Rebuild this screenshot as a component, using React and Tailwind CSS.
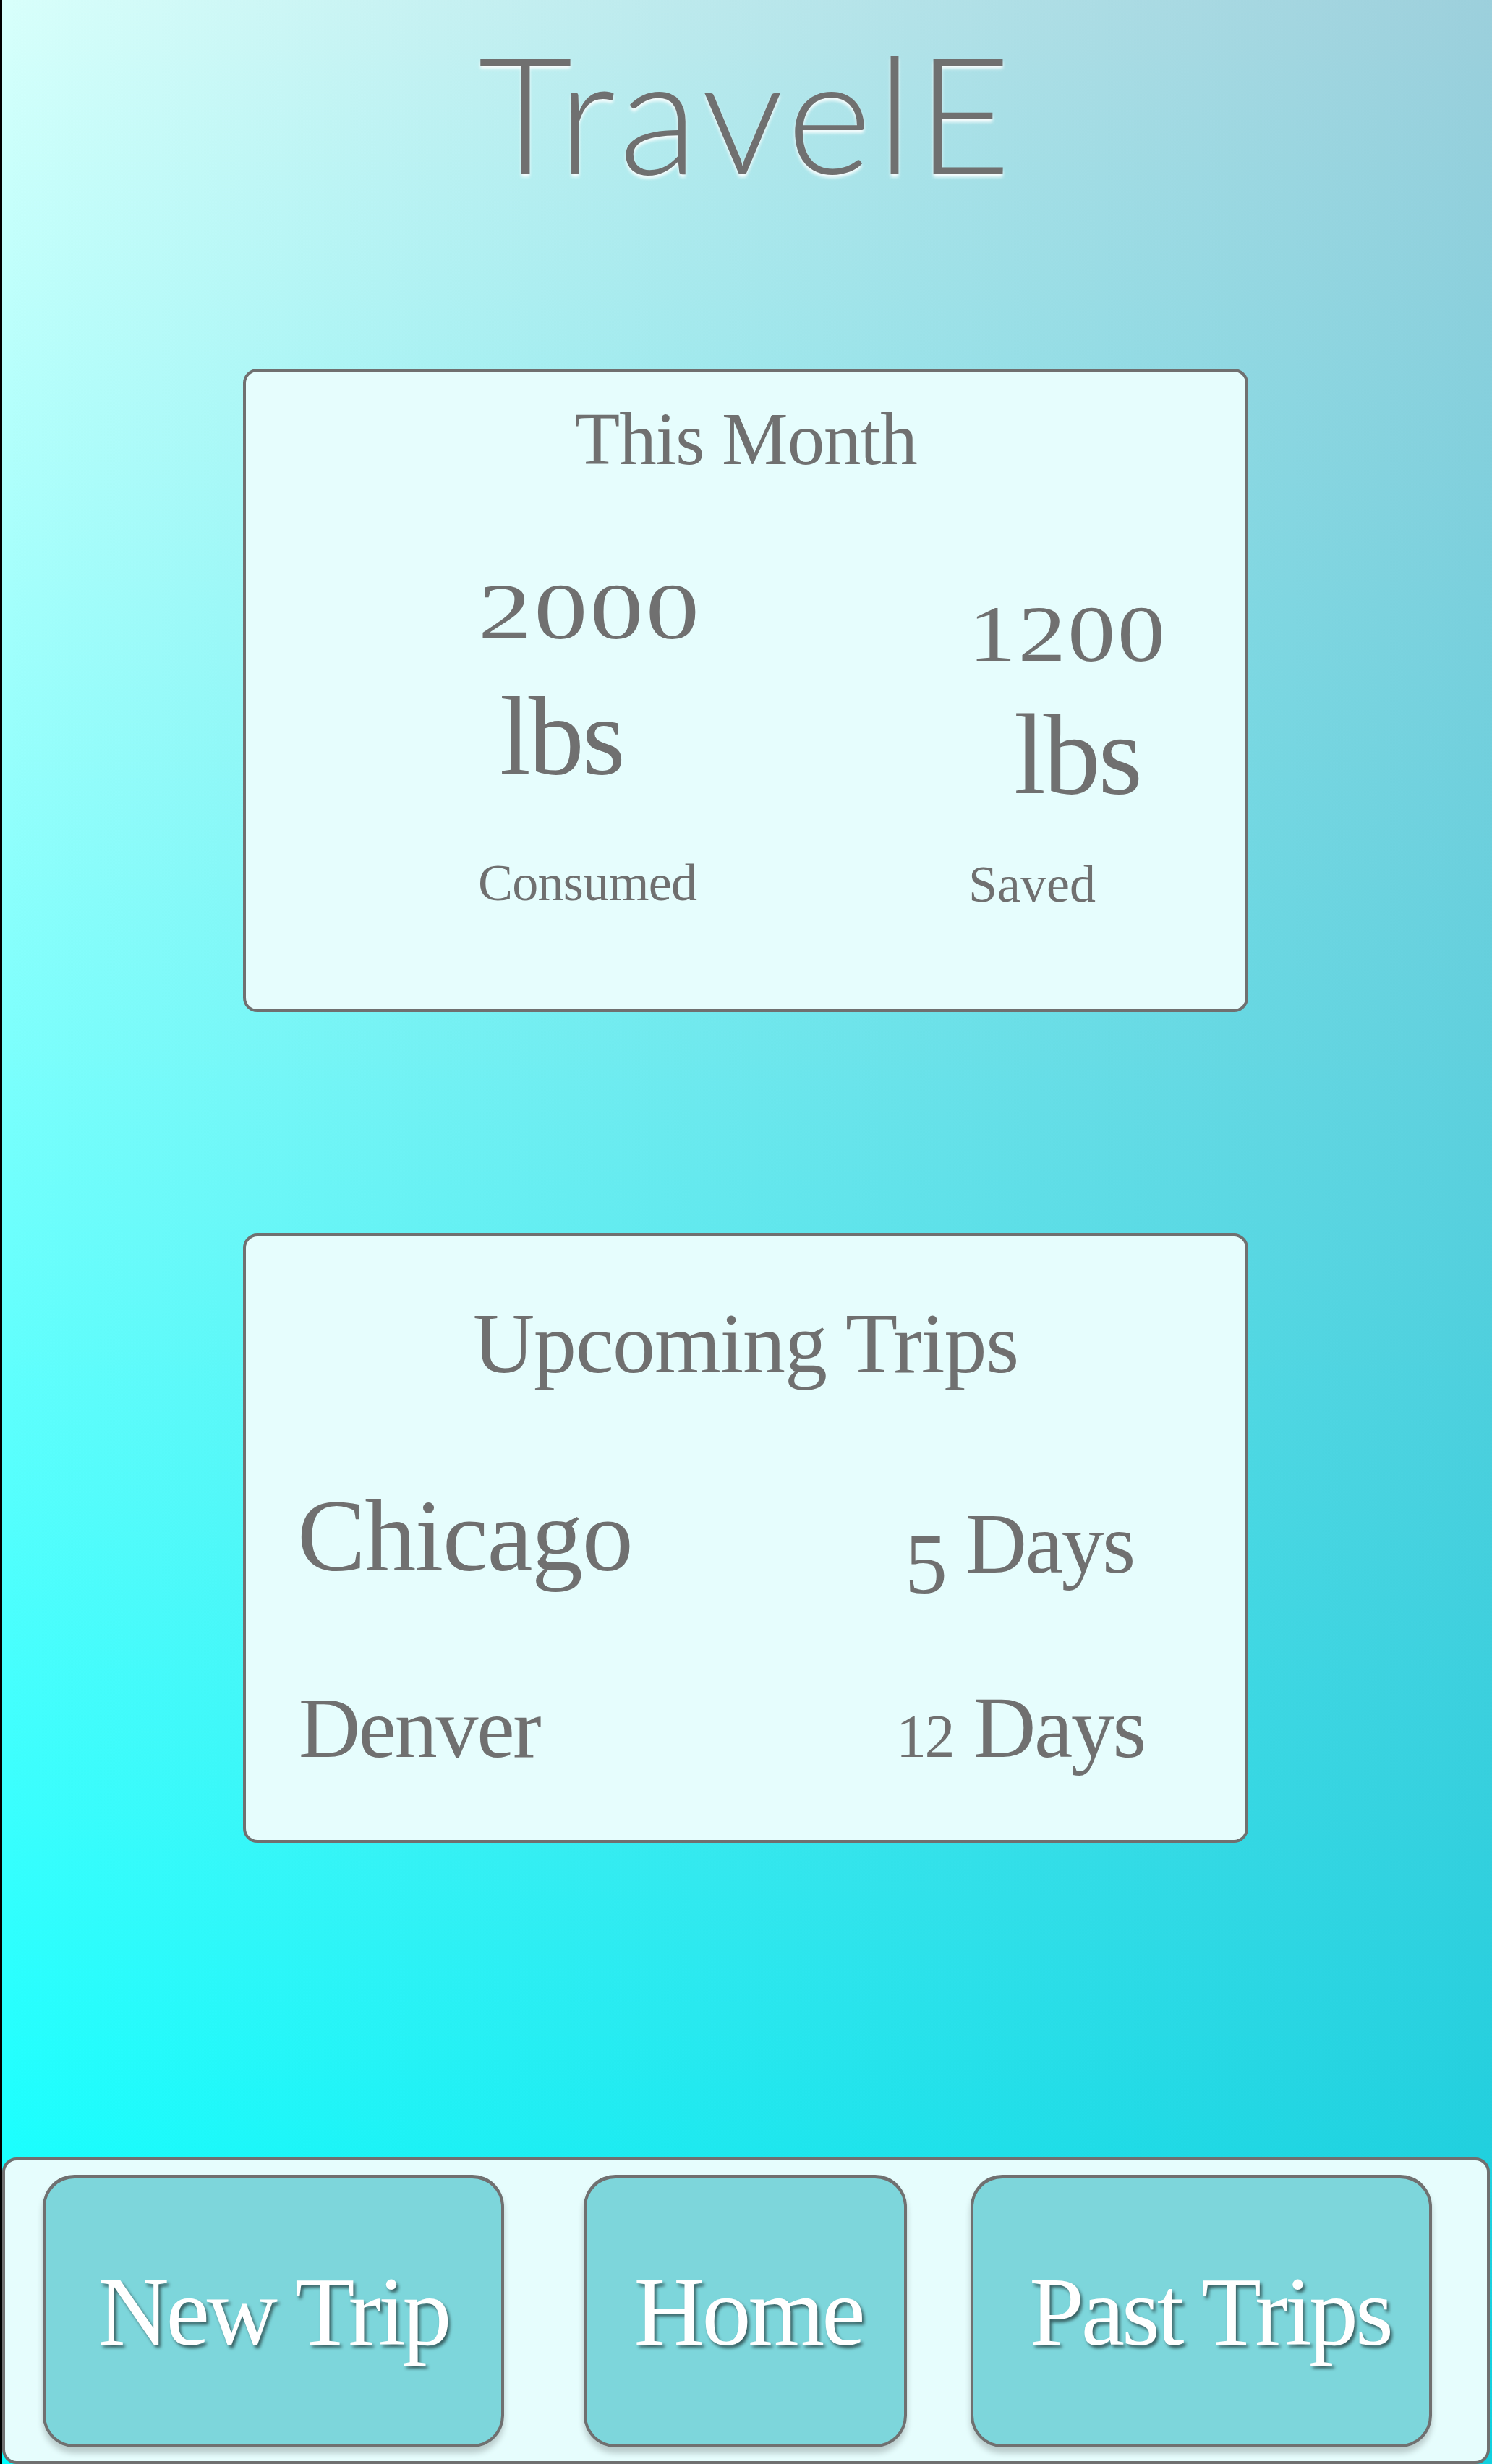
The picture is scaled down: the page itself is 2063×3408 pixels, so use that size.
export default function App() {
  const serif = "font-['Liberation_Serif','Times_New_Roman',serif]";
  const btn =
    "mt-[20px] h-[377px] rounded-[44px] border-[4px] border-t-[5px] border-[#707070] bg-[#7dd6db] shadow-[0_8px_8px_rgba(0,0,0,0.2)] flex items-center justify-center text-white text-[136px] leading-none tracking-[-0.03em] [text-shadow:3px_4px_4px_rgba(0,0,0,0.55)]";
  return (
    <div className="w-[2063px] h-[3408px] border-l-[3px] border-black flex flex-col overflow-hidden bg-[linear-gradient(to_right,rgba(45,119,162,0)_0%,rgba(45,119,162,0.35)_100%),linear-gradient(to_bottom,#d8fffb,#00ffff)]">
      {/* Header */}
      <div className="h-[510px] pt-[41px] flex justify-center">
        <h1 className="font-['Lato','Open_Sans',sans-serif] font-light text-[226px] leading-none tracking-[0.03em] text-[#707070] [text-shadow:0_4px_4px_rgba(255,255,255,0.9)]">
          TravelE
        </h1>
      </div>

      {/* This Month card */}
      <div className={`ml-[333px] w-[1390px] h-[890px] rounded-[20px] border-[4px] border-[#707070] bg-[#e6fdfd] text-[#707070] ${serif} flex flex-col`}>
        <div className="mt-[42px] text-center text-[103px] leading-none tracking-[-0.01em]">This Month</div>
        <div className="flex">
          <div className="ml-[321px] w-[678px] flex flex-col items-start">
            <div className="mt-[132px] text-[110px] leading-none tracking-[0.02em] scale-x-[1.35] origin-left">2000</div>
            <div className="mt-[40px] ml-[30px] text-[154px] leading-none tracking-[-0.02em]">lbs</div>
            <div className="mt-[90px] text-[72px] leading-none tracking-[-0.01em]">Consumed</div>
          </div>
          <div className="flex flex-col items-start">
            <div className="mt-[163px] text-[110px] leading-none tracking-[0.02em] scale-x-[1.2] origin-left">1200</div>
            <div className="mt-[33px] ml-[63px] text-[158px] leading-none tracking-[-0.02em]">lbs</div>
            <div className="mt-[64px] text-[72px] leading-none">Saved</div>
          </div>
        </div>
      </div>

      {/* Upcoming Trips card */}
      <div className={`ml-[333px] mt-[306px] w-[1390px] h-[843px] rounded-[20px] border-[4px] border-[#707070] bg-[#e6fdfd] text-[#707070] ${serif} flex flex-col`}>
        <div className="mt-[90px] text-center text-[118px] leading-none tracking-[-0.01em]">Upcoming Trips</div>
        <div className="grid grid-cols-[840px_1fr] items-start">
          <div className="pl-[71px] mt-[135px] text-[142px] leading-none tracking-[-0.01em]">Chicago</div>
          <div className="pl-[71px] mt-[159px] text-[118px] leading-none tracking-[-0.02em] whitespace-nowrap">
            <span className="inline-block translate-y-[28px]">5</span> Days
          </div>
        </div>
        <div className="grid grid-cols-[840px_1fr] items-start">
          <div className="pl-[73px] mt-[137px] text-[118px] leading-none tracking-[-0.02em]">Denver</div>
          <div className="pl-[59px] mt-[135px] text-[120px] leading-none tracking-[-0.02em] whitespace-nowrap">
            <span className="text-[84px] leading-none">12</span> Days
          </div>
        </div>
      </div>

      {/* Bottom nav */}
      <div className={`mt-[435px] w-[2057px] h-[424px] rounded-[20px] border-[4px] border-[#707070] bg-[#e6fdfd] ${serif} flex items-start`}>
        <button className={`ml-[52px] w-[638px] ${btn}`}>New Trip</button>
        <button className={`ml-[110px] w-[447px] ${btn}`}>
          <span className="ml-[8px]">Home</span>
        </button>
        <button className={`ml-[88px] w-[638px] ${btn}`}>
          <span className="ml-[24px]">Past Trips</span>
        </button>
      </div>
    </div>
  );
}
